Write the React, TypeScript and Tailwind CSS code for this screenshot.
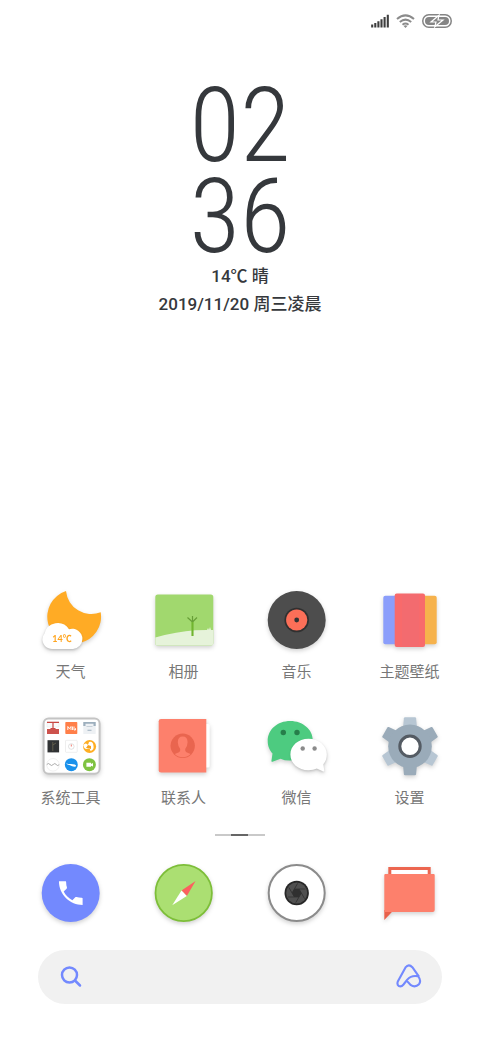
import type { ReactNode } from 'react';

const shadow = 'overflow-visible drop-shadow-[0_2px_2px_rgba(0,0,0,0.18)]';

function Icon({ children }: { children: ReactNode }) {
  return (
    <svg viewBox="0 0 61 60" className={`h-[60px] w-[61px] ${shadow}`} aria-hidden="true">
      {children}
    </svg>
  );
}

function WeatherIcon() {
  return (
    <Icon>
      <path d="M26 1.1A26.9 26.9 0 1 0 60.7 22.3A25.5 25.5 0 0 1 26 1.1Z" fill="#ffab25" />
      <path
        d="M12 59A9.6 9.6 0 0 1 4.6 43.4A13.4 13.4 0 0 1 29 39.2A10.3 10.3 0 0 1 42.4 49A10 10 0 0 1 33 59Z"
        fill="#fff"
        className="drop-shadow-[0_1px_1px_rgba(0,0,0,0.15)]"
      />
      <text x="22" y="52" textAnchor="middle" fill="#ffa51f" className="font-[Lato,'Noto_Sans_CJK_SC',sans-serif] text-[9px] font-bold">
        14℃
      </text>
    </Icon>
  );
}

function AlbumIcon() {
  return (
    <Icon>
      <rect x="2.3" y="4.5" width="58" height="51" rx="2.5" fill="#a1d86e" />
      <path d="M2.3 47.5Q24 41.5 42 40.3L54 40L55 38L56 40L57 37L58 40L60.3 40V53Q60.3 55.5 57.8 55.5H4.8Q2.3 55.5 2.3 53Z" fill="#e6f3da" />
      <path d="M39.5 46V32L34.5 27.5M39.5 32L44 27.5M39.5 32V26" fill="none" stroke="#679f37" strokeWidth="1.2" />
      <path d="M39.5 32V46" stroke="#70b52f" strokeWidth="2" />
    </Icon>
  );
}

function MusicIcon() {
  return (
    <Icon>
      <circle cx="30.7" cy="30" r="29" fill="#4d4d4d" />
      <circle cx="30.7" cy="30" r="12.3" fill="#303030" />
      <circle cx="30.7" cy="30" r="10.6" fill="#fc6f58" />
      <circle cx="30.7" cy="30" r="2.4" fill="#333" />
    </Icon>
  );
}

function ThemeIcon() {
  return (
    <Icon>
      <rect x="4.3" y="5.7" width="18" height="48.5" rx="2" fill="#8b9efb" />
      <rect x="40" y="5.7" width="17.7" height="48.5" rx="2" fill="#f6b24c" />
      <rect x="15.7" y="3.5" width="30.3" height="53.5" rx="2" fill="#f86a6b" />
      <rect x="23" y="4" width="17" height="52.5" fill="#f36b6f" />
    </Icon>
  );
}

function ToolsIcon() {
  return (
    <Icon>
      <rect x="3.6" y="2.6" width="56" height="55.2" rx="5" fill="#fff" stroke="#c4c4c4" strokeWidth="2" />
      <path d="M7 6H19V11H7Z" fill="#fafafa" stroke="#ddd" strokeWidth=".4" />
      <path d="M7 6.3H19M13 6.3V12.5M10.5 12.5H15.5" stroke="#c94743" strokeWidth="1.2" />
      <path d="M7 13H19V18H7Z" fill="#cd524d" />
      <rect x="25.3" y="6" width="12" height="12" rx=".7" fill="#ff7f49" />
      <path d="M27.8 14V10.5L29.4 12.7L31 10.5V14M32.5 10.5V14M34 10.5V14H35.5V12.2" fill="none" stroke="#fff" strokeWidth=".9" />
      <rect x="43.3" y="6" width="12.4" height="12" rx=".6" fill="#eef1f4" />
      <path d="M43.3 6H55.7V10H53.5V7.8H45.5V10H43.3ZM47.5 13.7H51.5V14.7H47.5Z" fill="#9dafbd" />
      <path d="M46.5 10.5H52.5" stroke="#c8d1d9" strokeWidth="1" />
      <rect x="7.5" y="24.2" width="11.6" height="12.2" fill="#303234" />
      <path d="M12.8 26V35M12.8 29L16 27" stroke="#6b6650" strokeWidth=".8" />
      <rect x="25.5" y="24.3" width="11.7" height="12" rx=".7" fill="#fff" stroke="#e3e3e3" strokeWidth=".6" />
      <circle cx="31.3" cy="30.5" r="2.8" fill="#fff" stroke="#d3d3d3" strokeWidth=".7" />
      <path d="M31.3 28.5V30.5" stroke="#ef6b5c" strokeWidth=".9" />
      <circle cx="49.6" cy="30.5" r="6.5" fill="#ffae22" />
      <path d="M43.3 29Q46 26 48 29L49 26Q53 25 53.5 30Q54.3 34 50.5 35Q50 31.5 46.5 33Q44 33 43.3 29Z" fill="#fff" />
      <path d="M46 32L48 29L51 30V33L48.5 32.3Z" fill="#f5a31d" />
      <circle cx="13" cy="48.8" r="6.3" fill="#fff" stroke="#e5e5e5" strokeWidth=".6" />
      <path d="M6.8 48.5Q8.5 46.5 10 48.5T13.2 48.5T16.2 48.5T19.2 48.7" fill="none" stroke="#969696" strokeWidth=".8" />
      <circle cx="31.3" cy="48.7" r="6.5" fill="#1a91eb" />
      <path d="M26 47.2Q29 48.3 31 48L34.8 48.4Q37 49.5 35.7 50.6Q32.5 51 30 49.3Q27 48.8 26 47.2Z" fill="#fff" />
      <circle cx="49.4" cy="48.7" r="6.5" fill="#7fc341" />
      <path d="M46.4 46.8H51V48L53 47V50.5L51 49.7V50.8H46.4Z" fill="#fff" />
    </Icon>
  );
}

function ContactsIcon() {
  return (
    <Icon>
      <rect x="46" y="8" width="10.7" height="43.5" rx="1.5" fill="#fff" />
      <path d="M8 3H53.3V56.5H8Q5.7 56.5 5.7 54.2V5.3Q5.7 3 8 3Z" fill="#fd806c" />
      <circle cx="29.7" cy="29.8" r="12.2" fill="#e9654f" />
      <path
        d="M29.7 20.6Q34.6 20.6 34.6 26.2Q34.3 31 32.2 33Q31.8 35.6 33.4 36.2L37.6 38.1Q34.3 41.3 29.7 41.3T21.8 38.1L26 36.2Q27.6 35.6 27.2 33Q25.1 31 24.8 26.2Q24.8 20.6 29.7 20.6Z"
        fill="#fd806c"
      />
    </Icon>
  );
}

function WechatIcon() {
  return (
    <Icon>
      <path d="M24.2 5C11.5 5 1.7 13.5 1.7 25C1.7 31 4.2 35 6.5 37.5L5.4 45Q5.6 46.3 7.2 45.6L14.5 42.7Q19 44.8 25 44.5C37.5 44 46.8 35.3 46.8 24.5C46.8 13.5 37 5 24.2 5Z" fill="#4dcb80" />
      <circle cx="17.3" cy="16.5" r="2.7" fill="#267e4a" />
      <circle cx="31" cy="16.5" r="2.7" fill="#267e4a" />
      <path
        d="M42.5 22.8C32.3 22.8 24.4 29.8 24.4 38.5S32.3 54.3 42.5 54.3Q47.3 54.3 50.8 52.5L56.8 55.3Q58.5 55.9 58.2 54.2L57.3 48.2Q60.8 44.2 60.8 38.5C60.8 29.8 52.7 22.8 42.5 22.8Z"
        fill="#fff"
        className="drop-shadow-[0_1px_1px_rgba(0,0,0,0.12)]"
      />
      <circle cx="36.7" cy="32.5" r="2.2" fill="#8b8b8b" />
      <circle cx="48.6" cy="32.5" r="2.2" fill="#8b8b8b" />
    </Icon>
  );
}

const teeth = [
  { angle: 0, fill: '#b7c6d3' },
  { angle: 60, fill: '#9aabb9' },
  { angle: 120, fill: '#b7c6d3' },
  { angle: 180, fill: '#9aabb9' },
  { angle: 240, fill: '#b7c6d3' },
  { angle: 300, fill: '#9aabb9' },
];

function SettingsIcon() {
  return (
    <Icon>
      {teeth.map((t) => (
        <path key={t.angle} d="M26 1.3H36Q37 1.3 37.1 2.3L38.2 14H23.8L24.9 2.3Q25 1.3 26 1.3Z" fill={t.fill} transform={`rotate(${t.angle} 31 30.3)`} />
      ))}
      <circle cx="31" cy="30.3" r="21.8" fill="#9aabb9" />
      <circle cx="31" cy="30.3" r="10.2" fill="#fff" stroke="#545b63" strokeWidth="3" />
    </Icon>
  );
}

function PhoneIcon() {
  return (
    <Icon>
      <circle cx="30.7" cy="30" r="29" fill="#7389fe" />
      <path
        d="M6.62 10.79c1.44 2.83 3.76 5.14 6.59 6.59l2.2-2.2c.27-.27.67-.36 1.02-.24 1.12.37 2.33.57 3.57.57.55 0 1 .1 1 .5V21c-9.39 0-18-7.61-18-18h5c.4 0 .5.45.5 1 0 1.25.2 2.45.57 3.57.11.35.03.74-.25 1.02l-2.2 2.2z"
        fill="#fff"
        transform="translate(15 14.4) scale(1.315)"
      />
    </Icon>
  );
}

function BrowserIcon() {
  return (
    <Icon>
      <circle cx="30.7" cy="30" r="28.2" fill="#abdf72" stroke="#7dbe39" strokeWidth="1.8" />
      <path d="M42.6 18L28.5 27.6L33.8 32.9Z" fill="#fb605f" />
      <path d="M19.2 42.2L28.5 27.6L33.8 32.9Z" fill="#fff" />
    </Icon>
  );
}

function CameraIcon() {
  return (
    <Icon>
      <circle cx="30.7" cy="30" r="28" fill="#fff" stroke="#8b8b8b" strokeWidth="2" />
      <circle cx="30.7" cy="30" r="12.2" fill="#272727" />
      <circle cx="30.7" cy="30" r="10.5" fill="#505050" />
      {[0, 60, 120, 180, 240, 300].map((angle) => (
        <path key={angle} d="M28.4 26H39.5" stroke="#303030" strokeWidth=".8" transform={`rotate(${angle} 30.7 30)`} />
      ))}
      <path d="M28.4 26H33L35.3 30L33 34H28.4L26.1 30Z" fill="#303030" />
    </Icon>
  );
}

function MessageIcon() {
  return (
    <Icon>
      <path d="M10.8 13V5.5H50.2V13" fill="#fff" stroke="#ec6650" strokeWidth="3" />
      <path d="M5.3 47H14.8L5.3 57Z" fill="#e9604a" />
      <path d="M6.3 11H54.7Q55.7 11 55.7 12V47Q55.7 49 53.7 49H5.3V12Q5.3 11 6.3 11Z" fill="#fd806c" />
    </Icon>
  );
}

const apps = [
  { label: '天气', icon: <WeatherIcon /> },
  { label: '相册', icon: <AlbumIcon /> },
  { label: '音乐', icon: <MusicIcon /> },
  { label: '主题壁纸', icon: <ThemeIcon /> },
  { label: '系统工具', icon: <ToolsIcon /> },
  { label: '联系人', icon: <ContactsIcon /> },
  { label: '微信', icon: <WechatIcon /> },
  { label: '设置', icon: <SettingsIcon /> },
];

const dock = [
  { label: '电话', icon: <PhoneIcon /> },
  { label: '浏览器', icon: <BrowserIcon /> },
  { label: '相机', icon: <CameraIcon /> },
  { label: '短信', icon: <MessageIcon /> },
];

function StatusBar() {
  return (
    <header className="flex h-[42px] items-center justify-end gap-[7px] pr-7">
      <svg viewBox="0 0 18 14" className="h-[14px] w-[18px]" aria-hidden="true">
        <path d="M1.2 13.5V10.5M4.3 13.5V9M7.4 13.5V7.3M10.5 13.5V5.2M13.6 13.5V3M16.8 13.5V.7" stroke="#3e3e3e" strokeWidth="2.1" />
      </svg>
      <svg viewBox="0 0 19 14" className="h-[14px] w-[19px]" aria-hidden="true">
        <path d="M1 5.1Q9.5-2.3 18 5.1M3.8 8Q9.5 3.3 15.2 8M6.5 10.7Q9.5 8.3 12.5 10.7" fill="none" stroke="#8b8b8b" strokeWidth="2" />
        <path d="M7.6 12L9.5 14L11.4 12Q9.5 10.6 7.6 12Z" fill="#8b8b8b" />
      </svg>
      <svg viewBox="0 0 30 14" className="h-[14px] w-[30px]" aria-hidden="true">
        <rect x=".8" y=".8" width="28.4" height="12.4" rx="6" fill="#fff" stroke="#858585" strokeWidth="1.5" />
        <rect x="3" y="3" width="24" height="8" rx="4" fill="#858585" />
        <path d="M17 1.2L9 8H14L12.8 12.8L21 6H16Z" fill="#858585" stroke="#fff" strokeWidth="1.2" />
      </svg>
    </header>
  );
}

export default function App() {
  return (
    <div className="flex min-h-screen flex-col bg-white font-[Roboto,'Noto_Sans_CJK_SC',sans-serif]">
      <StatusBar />

      <section className="flex flex-col items-center pt-[38px] text-[#35383c]">
        <time dateTime="02:36" className="flex flex-col items-center font-['Roboto_Condensed',Roboto,sans-serif] text-[104px] leading-[91px] font-light">
          <span>02</span>
          <span>36</span>
        </time>
        <p className="text-[17px] leading-7 font-medium">14℃ 晴</p>
        <p className="text-[17px] leading-7 font-medium">2019/11/20 周三凌晨</p>
      </section>

      <main className="mt-auto grid grid-cols-4 gap-y-[34px] px-3.5">
        {apps.map((app) => (
          <button key={app.label} type="button" className="flex flex-col items-center gap-3">
            {app.icon}
            <span className="text-[15px] leading-5 whitespace-nowrap text-[#777]">{app.label}</span>
          </button>
        ))}
      </main>

      <div className="mt-[26px] flex h-0.5 justify-center" aria-hidden="true">
        <span className="w-4 bg-[#c9c9c9]" />
        <span className="w-[17px] bg-[#666]" />
        <span className="w-[17px] bg-[#c9c9c9]" />
      </div>

      <nav className="mt-[27px] grid grid-cols-4 px-3.5">
        {dock.map((app) => (
          <button key={app.label} type="button" aria-label={app.label} className="flex justify-center">
            {app.icon}
          </button>
        ))}
      </nav>

      <form className="mx-[38px] mt-[27px] mb-9 flex h-[54px] items-center rounded-full bg-[#f1f1f1] px-5" onSubmit={(e) => e.preventDefault()}>
        <label htmlFor="search" className="pl-0.5">
          <svg viewBox="0 0 22 22" className="h-[22px] w-[22px]" fill="none" stroke="#7389fe" strokeWidth="2.5" strokeLinecap="round" aria-label="搜索">
            <circle cx="9.5" cy="9" r="7.5" />
            <path d="M15 14.5L20 19.5" />
          </svg>
        </label>
        <input id="search" type="text" className="min-w-0 flex-1 bg-transparent px-3 text-base text-[#333] outline-none" />
        <button type="button" aria-label="语音助手">
          <svg viewBox="0 0 26 26" className="h-[26px] w-[26px]" fill="none" stroke="#7389fe" strokeWidth="2.1" strokeLinejoin="round" aria-hidden="true">
            <path d="M23 12.7L16.3 3.2Q12.8 -.6 9.5 3.4L1.8 17.5Q.7 20.7 2.9 22.1Q5.3 23.2 7.5 20.5L11.3 15.6Q15.5 10.8 22.2 12.3Q25.6 16.5 23 20.2Q19.3 23.9 14.9 21.2L10.6 16.6" />
          </svg>
        </button>
      </form>
    </div>
  );
}
